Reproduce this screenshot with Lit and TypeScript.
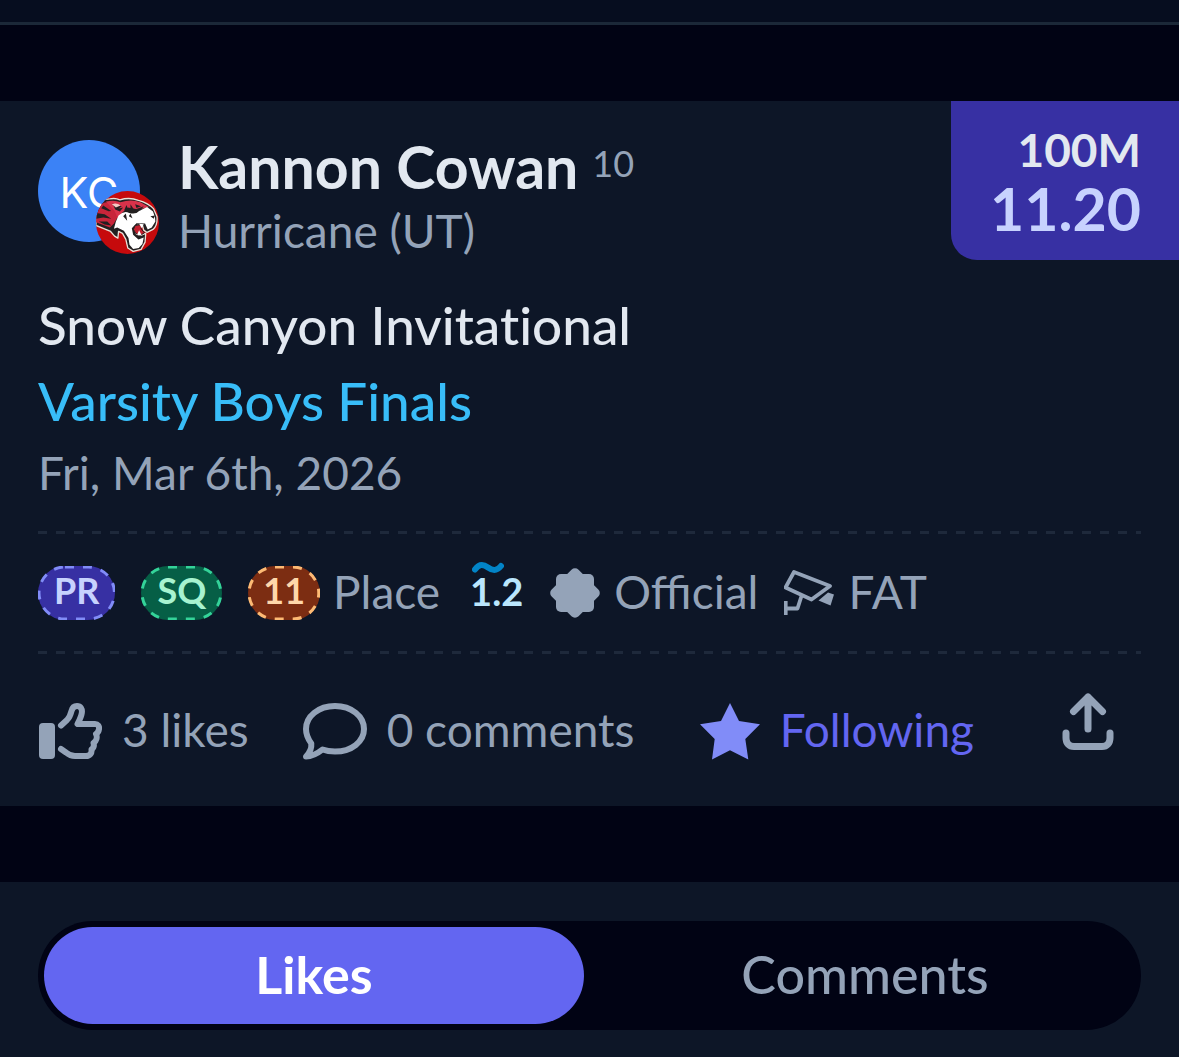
import { LitElement, html, css, svg } from "lit";
import { customElement, state } from "lit/decorators.js";
import { classMap } from "lit/directives/class-map.js";

const tiger = svg`
  <svg viewBox="0 0 190 190" aria-hidden="true">
    <defs><clipPath id="disc"><circle cx="95" cy="95" r="95" /></clipPath></defs>
    <g clip-path="url(#disc)">
      <rect width="190" height="190" fill="#c60a0c" />
      <path d="M0 44 Q14 24 42 24 Q58 20 72 27 Q100 18 128 28 Q158 36 174 54 L184 78 Q186 104 172 116 L154 125 L144 118 L140 104 L124 104 L117 118 L122 130 L134 134 L150 128 L148 154 L136 176 L112 182 L96 172 L90 146 L80 128 L68 122 L66 142 L56 136 L44 122 L0 104Z" fill="#231f20" stroke="#e9e1d8" stroke-width="4" stroke-linejoin="round" />
      <path d="M0 54 Q14 34 38 33 L62 52 L68 74 L54 98 L42 110 L0 94Z" fill="#c8253a" />
      <path d="M30 32 Q56 26 74 34 Q106 24 134 34 L160 48 L128 56 L96 50 L78 66 L68 88 L56 60Z" fill="#d8324a" />
      <path d="M68 74 Q84 58 100 66 Q120 72 130 60 L154 48 L172 62 L178 80 L179 92 L168 110 L156 116 L148 98 L122 97 L108 112 L112 132 L128 146 L144 140 L140 160 L129 172 L112 175 L101 162 L98 142 L84 120 L64 110 L54 114 L60 92Z" fill="#fff" />
      <path d="M0 66 L26 70 L46 84 L22 80 L0 84Z M22 44 L46 60 L38 61 L16 52Z M8 92 L34 92 L46 104 L26 101Z M50 38 L78 46 L68 53 L82 50 L72 62 L58 56Z M92 42 L100 64 L85 58Z M104 40 L116 58 L104 54Z M118 40 L136 46 L122 51Z M90 68 L94 90 L82 76Z M104 68 L110 82 L99 76Z M118 56 L144 46 L134 58Z M164 76 L178 74 L174 84Z" fill="#231f20" />
      <path d="M48 40 Q62 34 74 44 L60 50Z" fill="#f3c9c4" />
      <path d="M118 104 L138 101 L136 114 L146 126 L134 134 L120 128 L113 116Z" fill="#c3202f" stroke="#231f20" stroke-width="3" />
      <path d="M130 99 L138 112 L144 100Z M124 132 L130 118 L138 134Z" fill="#fff" />
    </g>
  </svg>`;

const thumb = svg`
  <svg width="64" height="57" viewBox="0 0 64 57" fill="none" stroke="currentColor" stroke-width="6" stroke-linecap="round" stroke-linejoin="round" aria-hidden="true">
    <rect x="1" y="20" width="16" height="36" rx="4" fill="currentColor" stroke="none" />
    <path d="M23 22.500L29 17C32 14 32.500 12 33.500 8C34.300 4.500 36.500 3 39 3C42.500 3 44.500 6 43.800 10C43.200 14 41.500 17 39.500 21H57C60 21 61.500 23.500 61 26C60.600 29 59.500 30 58 31C59.500 34 58.500 38 55.500 40C56.500 43 55.500 45 53.500 46.500C54 50 52 53 48 53H37C33 53 31 52 28 49.500L23 46" />
  </svg>`;

const bubble = svg`
  <svg width="64" height="57" viewBox="0 0 64 57" fill="none" stroke="currentColor" stroke-width="6" stroke-linejoin="round" aria-hidden="true">
    <path d="M3 53.500C7 49.500 8.700 44.500 8.300 40.500C5 36 3 31.500 3 26C3 13.300 15.500 3 32 3S61 13.300 61 26S48.500 48.500 32 48.500C27.500 48.500 23.500 48 19.500 46.500C14.500 50.500 8.500 53.500 3 53.500Z" />
  </svg>`;

const star = svg`
  <svg width="60" height="57" viewBox="0 0 60 57" fill="#818cf8" aria-hidden="true">
    <path d="M30 0L39 18L60 21.300L45.300 36L48.300 56.500L30 47.300L12 56.500L14.700 36L0 21.300L21 18Z" />
  </svg>`;

const share = svg`
  <svg width="52" height="58" viewBox="0 0 52 58" fill="none" stroke="currentColor" stroke-width="7" stroke-linecap="round" stroke-linejoin="round" aria-hidden="true">
    <path d="M26 36V4M11.500 18.500L26 4L40.500 18.500M4 40V45C4 50 7 53.500 12 53.500H40C45 53.500 48 50 48 45V40" />
  </svg>`;

const seal = svg`
  <svg width="50" height="52" viewBox="0 0 50 50" fill="currentColor" aria-hidden="true">
    <rect x="6" y="6" width="38" height="38" rx="5" />
    <rect x="6" y="6" width="38" height="38" rx="5" transform="rotate(45 25 25)" />
  </svg>`;

const camera = svg`
  <svg width="50" height="46" viewBox="0 0 50 46" fill="none" stroke="currentColor" stroke-width="3.800" stroke-linejoin="round" aria-hidden="true">
    <path d="M10 2L46 16L27.500 29.500L1.500 17.500ZM17.500 26L13.500 38.500H1.500M1.700 31V45" />
    <path d="M34.500 30.500L44 22.500L50 24.500L46.500 35.500Z" fill="currentColor" stroke="none" />
  </svg>`;

const tilde = svg`
  <svg class="tilde" width="32" height="12" viewBox="0 0 32 12" fill="none" stroke="#0284c7" stroke-width="6" stroke-linecap="round" aria-hidden="true">
    <path d="M3 7.500C7 2 11 2 16 5.500S25 9 29 4" />
  </svg>`;

const ring = svg`<svg class="ring" aria-hidden="true"><rect class="dash" rx="26" ry="26" /></svg>`;

@customElement("app-root")
export class AppRoot extends LitElement {
  @state() private tab: "Likes" | "Comments" = "Likes";

  static styles = css`
    :host {
      display: block;
      min-height: 100vh;
      background: #010314;
      color: #94a3b8;
      font-family: Lato, "Open Sans", sans-serif;
      font-size: 46px;
    }
    * { box-sizing: border-box; }
    svg { display: block; flex: none; }
    h1, h2, p { margin: 0; }
    a { color: inherit; text-decoration: none; }
    button {
      font: inherit;
      color: inherit;
      background: none;
      border: 0;
      padding: 0;
      cursor: pointer;
    }
    .topbar { height: 25px; background: #060d1f; border-bottom: 3px solid #1b2838; }
    .card { margin-top: 76px; background: #0d1627; padding: 0 38px; }
    .head { display: flex; align-items: flex-start; }
    .avatar {
      position: relative;
      flex: none;
      width: 102px;
      height: 102px;
      margin: 39px 38px 0 0;
      border-radius: 50%;
      background: #3b82f6;
      color: #fff;
      font: 400 43px/104px Inter, sans-serif;
      text-align: center;
    }
    .team { position: absolute; left: 58px; top: 51px; width: 63px; height: 63px; }
    .who { flex: 1; padding-top: 36px; }
    .name { display: flex; gap: 14px; align-items: flex-start; }
    h1 { font-size: 59px; line-height: 60px; font-weight: 700; color: #e2e8f0; }
    .grade { font-size: 36px; line-height: 52px; }
    .school { line-height: 60px; margin-top: 4px; }
    .mark {
      margin-right: -38px;
      padding: 20px 38px 21px 39px;
      background: #3730a3;
      border-radius: 0 0 0 26px;
      text-align: right;
      font-weight: 700;
    }
    .mark p { line-height: 58px; color: #e2e8f0; }
    .mark .time { font-size: 59px; line-height: 60px; color: #c7d2fe; }
    .meet { padding: 26px 0 24px; font-variant-ligatures: none; }
    .meet h2, .meet .race { font-size: 53px; line-height: 76px; font-weight: 500; color: #e2e8f0; }
    .meet .race { color: #38bdf8; }
    .meet time { display: block; line-height: 68px; }
    .rule {
      height: 3px;
      background: repeating-linear-gradient(90deg, #1e293b 0 9px, transparent 9px 18px);
    }
    .facts { display: flex; align-items: center; min-height: 117px; line-height: 50px; }
    .facts .label { padding-bottom: 2px; }
    .pill {
      position: relative;
      height: 54px;
      padding: 0 16px;
      border-radius: 27px;
      background: #3730a3;
      color: #c7d2fe;
      font-size: 36px;
      font-weight: 700;
      line-height: 49px;
      margin-right: 26px;
    }
    .ring { position: absolute; inset: 0; width: 100%; height: 100%; color: #818cf8; }
    .dash {
      x: 1px;
      y: 1px;
      width: calc(100% - 2px);
      height: calc(100% - 2px);
      fill: none;
      stroke: currentColor;
      stroke-width: 3px;
      stroke-dasharray: 9 9;
    }
    .pill.sq { background: #065f46; color: #a7f3d0; }
    .pill.sq .ring { color: #34d399; }
    .pill.place { background: #7c2d12; color: #fed7aa; padding: 0 15px; margin-right: 13px; }
    .pill.place .ring { color: #fdba74; }
    .wind {
      position: relative;
      margin: 0 27px 0 30px;
      padding-bottom: 4px;
      font-size: 38px;
      font-weight: 700;
      color: #bae6fd;
    }
    .tilde { position: absolute; left: 2px; top: -4px; }
    .seal { padding-right: 14px; }
    .camera { padding: 0 14px 0 26px; }
    .actions { display: flex; justify-content: space-between; padding: 39px 27px 45px 0; }
    .group { display: flex; align-items: flex-start; }
    .group button { display: flex; gap: 20px; align-items: center; padding-top: 8px; line-height: 60px; white-space: nowrap; }
    .group span { padding-bottom: 2px; line-height: 58px; }
    .likes { margin-right: 54px; }
    .group .follow { color: #6366f1; margin-right: 88px; }
    .group .share { padding-top: 0; }
    .panel { margin-top: 76px; padding: 39px 38px 27px; background: #0d1627; }
    .tabs {
      display: grid;
      grid-template-columns: 1fr 1fr;
      gap: 11px;
      padding: 6px;
      border-radius: 55px;
      background: #010314;
    }
    .tabs button {
      padding-bottom: 3px;
      border-radius: 49px;
      font-size: 52px;
      line-height: 94px;
      font-weight: 500;
    }
    .tabs .on { background: #6366f1; color: #fff; font-weight: 700; }
  `;

  private renderTab(name: "Likes" | "Comments") {
    const on = this.tab === name;
    return html`<button role="tab" aria-selected=${on} class=${classMap({ on })} @click=${() => (this.tab = name)}>${name}</button>`;
  }

  render() {
    return html`
      <div class="topbar"></div>
      <main>
        <article class="card">
          <header class="head">
            <div class="avatar">KC<div class="team">${tiger}</div></div>
            <div class="who">
              <div class="name"><h1>Kannon Cowan</h1><span class="grade">10</span></div>
              <p class="school">Hurricane (UT)</p>
            </div>
            <div class="mark"><p>100M</p><p class="time">11.20</p></div>
          </header>
          <section class="meet">
            <h2>Snow Canyon Invitational</h2>
            <p class="race"><a href="#race">Varsity Boys Finals</a></p>
            <time datetime="2026-03-06">Fri, Mar 6th, 2026</time>
          </section>
          <div class="rule"></div>
          <section class="facts">
            <span class="pill">${ring}PR</span>
            <span class="pill sq">${ring}SQ</span>
            <span class="pill place">${ring}11</span>
            <span class="label">Place</span>
            <span class="wind">${tilde}1.2</span>
            <span class="seal">${seal}</span>
            <span class="label">Official</span>
            <span class="camera">${camera}</span>
            <span class="label">FAT</span>
          </section>
          <div class="rule"></div>
          <footer class="actions">
            <div class="group">
              <button class="likes">${thumb}<span>3 likes</span></button>
              <button>${bubble}<span>0 comments</span></button>
            </div>
            <div class="group">
              <button class="follow">${star}<span>Following</span></button>
              <button class="share" aria-label="Share">${share}</button>
            </div>
          </footer>
        </article>
        <section class="panel">
          <div class="tabs" role="tablist">${this.renderTab("Likes")}${this.renderTab("Comments")}</div>
        </section>
      </main>
    `;
  }
}
